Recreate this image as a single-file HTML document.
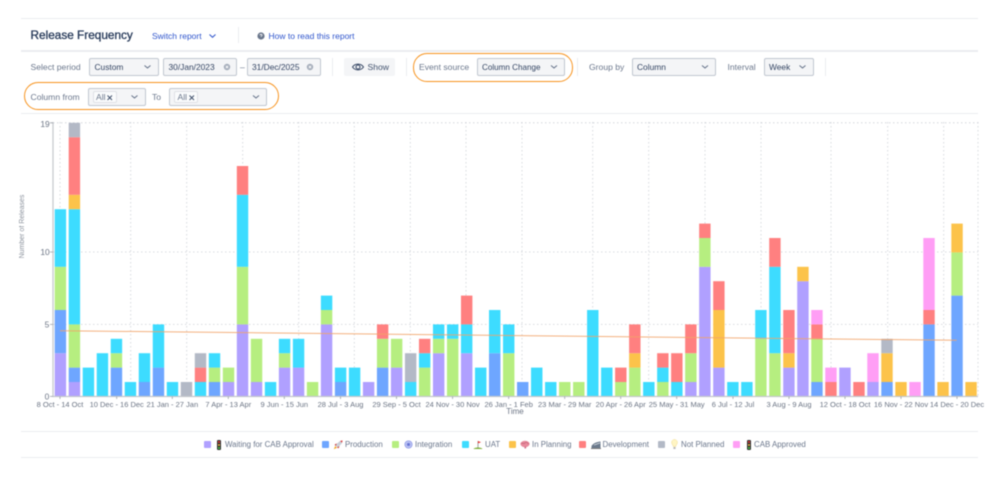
<!DOCTYPE html>
<html lang="en">
<head>
<meta charset="utf-8">
<title>Release Frequency</title>
<style>
html,body{margin:0;padding:0;background:#fff;}
body{width:999px;height:484px;position:relative;overflow:hidden;font-family:"Liberation Sans",sans-serif;}
#w{position:absolute;left:0;top:0;width:999px;height:484px;filter:blur(.4px);}
.a{position:absolute;white-space:nowrap;}
.t{font-size:8.6px;line-height:12px;color:#6b778c;}
.v{font-size:8.4px;line-height:12px;color:#344563;}
.l{font-size:8.5px;line-height:12px;color:#2f55cc;}
.s{position:absolute;box-sizing:border-box;background:#f4f5f7;border:1px solid #c1c7d0;border-radius:2px;height:18px;}
.h{position:absolute;height:1px;background:#ebecf0;}
.d{position:absolute;width:1px;background:#ebecf0;}
.o{position:absolute;box-sizing:border-box;border:1.8px solid #f7931e;border-radius:14px;height:28.5px;}
.tg{position:absolute;box-sizing:border-box;background:#fafbfc;border:1px solid #dfe1e6;border-radius:2px;height:12px;top:91px;}
.lg{font-size:7.9px;line-height:10px;color:#6b778c;top:439.5px;}
.q{position:absolute;width:7px;height:7px;top:441px;border-radius:1px;}
#b rect{width:.814px;}
.P{fill:#b0a0ff}.B{fill:#6ea6ff}.G{fill:#b6ee80}.C{fill:#3ddcff}.Y{fill:#fcc34a}.R{fill:#ff8080}.S{fill:#b3b9c6}.K{fill:#ff9ef5}
.x text{font-family:"Liberation Sans",sans-serif;font-size:7.5px;fill:#6b7484;text-anchor:middle;}
</style>
</head>
<body>
<div id="w">
<div class="h" style="left:21px;top:18px;width:957px"></div>
<div class="h" style="left:21px;top:50px;width:957px;height:1.5px"></div>
<div class="h" style="left:21px;top:113px;width:957px"></div>
<div class="h" style="left:21px;top:431px;width:957px;height:1px"></div>
<div class="h" style="left:21px;top:457px;width:957px"></div>

<div class="a" style="left:30.5px;top:27px;font-size:11.8px;line-height:16px;color:#253858;-webkit-text-stroke:.3px #253858">Release Frequency</div>
<div class="a l" style="left:152px;top:30px">Switch report</div>
<svg class="a" style="left:208px;top:33px" width="9" height="6"><path d="M1.5 1.5 4.5 4.3 7.5 1.5" fill="none" stroke="#2f55cc" stroke-width="1"/></svg>
<div class="d" style="left:238px;top:27px;height:16px"></div>
<svg class="a" style="left:257px;top:32px" width="8" height="8"><circle cx="4" cy="4" r="3.6" fill="#6b778c"/><path d="M3 3.2C3 2 5 2 5 3.2 5 4 4 4 4 4.9" fill="none" stroke="#fff" stroke-width=".8"/></svg>
<div class="a l" style="left:268.5px;top:30px">How to read this report</div>

<div class="a t" style="left:30.5px;top:61px">Select period</div>
<div class="s" style="left:89px;top:58px;width:70px"></div>
<div class="a v" style="left:94.5px;top:61px">Custom</div>
<div class="s" style="left:163px;top:58px;width:74px"></div>
<div class="a v" style="left:168.5px;top:61px">30/Jan/2023</div>
<svg class="a" style="left:223px;top:63px" width="8" height="8"><circle cx="4" cy="4" r="3.2" fill="#a5adba"/><path d="M2.8 2.8 5.2 5.2M5.2 2.8 2.8 5.2" stroke="#fff" stroke-width=".8"/></svg>
<div class="a t" style="left:240px;top:61px">–</div>
<div class="s" style="left:246.5px;top:58px;width:74px"></div>
<div class="a v" style="left:252px;top:61px">31/Dec/2025</div>
<svg class="a" style="left:306px;top:63px" width="8" height="8"><circle cx="4" cy="4" r="3.2" fill="#a5adba"/><path d="M2.8 2.8 5.2 5.2M5.2 2.8 2.8 5.2" stroke="#fff" stroke-width=".8"/></svg>
<div class="d" style="left:332px;top:58px;height:18px"></div>
<div class="a" style="left:344px;top:58px;width:51px;height:18px;background:#f4f5f7;border-radius:2px"></div>
<svg class="a" style="left:351px;top:61px" width="14" height="12"><path d="M1.5 6C4 2.2 10 2.2 12.5 6 10 9.8 4 9.8 1.5 6Z" fill="none" stroke="#344563" stroke-width="1"/><circle cx="7" cy="6" r="2" fill="none" stroke="#344563" stroke-width="1"/></svg>
<div class="a" style="left:367.5px;top:61px;font-size:8.6px;line-height:12px;color:#42526e">Show</div>
<div class="d" style="left:406px;top:58px;height:18px"></div>

<div class="o" style="left:412.5px;top:53px;width:160.5px"></div>
<div class="a t" style="left:419px;top:61px">Event source</div>
<div class="s" style="left:476.5px;top:58px;width:88.5px"></div>
<div class="a v" style="left:482px;top:62px;font-size:8.1px">Column Change</div>
<div class="d" style="left:577px;top:58px;height:18px"></div>
<div class="a t" style="left:589px;top:61px">Group by</div>
<div class="s" style="left:631.5px;top:58px;width:84px"></div>
<div class="a v" style="left:637px;top:61px">Column</div>
<div class="a t" style="left:727.5px;top:61px">Interval</div>
<div class="s" style="left:763.5px;top:58px;width:50px"></div>
<div class="a v" style="left:769px;top:61px">Week</div>
<div class="d" style="left:825px;top:58px;height:18px"></div>

<div class="o" style="left:23.5px;top:81.5px;width:255px"></div>
<div class="a t" style="left:30.5px;top:91px">Column from</div>
<div class="s" style="left:87.5px;top:88px;width:58px"></div>
<div class="tg" style="left:92.5px;width:24px"></div>
<div class="a t" style="left:96px;top:91px">All</div>
<svg class="a" style="left:106px;top:93.5px" width="8" height="8"><path d="M1.5 1.5 6 6M6 1.5 1.5 6" stroke="#42526e" stroke-width="1"/></svg>
<div class="a t" style="left:152px;top:91px">To</div>
<div class="s" style="left:169px;top:88px;width:98px"></div>
<div class="tg" style="left:174px;width:24px"></div>
<div class="a t" style="left:177.5px;top:91px">All</div>
<svg class="a" style="left:188px;top:93.5px" width="8" height="8"><path d="M1.5 1.5 6 6M6 1.5 1.5 6" stroke="#42526e" stroke-width="1"/></svg>

<svg class="a" style="left:0;top:0" width="999" height="120" fill="none" stroke="#5e6c84" stroke-width=".9">
<path d="M144.5 65.5 147.5 68 150.5 65.5"/>
<path d="M551 65.5 554 68 557 65.5"/>
<path d="M702 65.5 705 68 708 65.5"/>
<path d="M799.5 65.5 802.5 68 805.5 65.5"/>
<path d="M131.5 95.5 134.5 98 137.5 95.5"/>
<path d="M253 95.5 256 98 259 95.5"/>
</svg>

<svg class="a" style="left:0;top:115px" width="999" height="305" viewBox="0 115 999 305">
<g stroke="#ced1d7" stroke-width=".8" stroke-dasharray="1.5 2.5" fill="none">
<path d="M53 122.8H978M53 252H978M53 324.4H978"/>
<path d="M60 122V396M130.7 122V396M186.7 122V396M242.7 122V396M298.7 122V396M354.3 122V396M410.3 122V396M466 122V396M522 122V396M592.7 122V396M648.7 122V396M705 122V396M761 122V396M831 122V396M887.7 122V396M943.7 122V396M978 122V396"/>
</g>
<g id="b" transform="translate(54.7 396.4) scale(14.01 -14.4)">
<rect class="P" x="0" y="0" height="3"/><rect class="B" x="0" y="3" height="3"/><rect class="G" x="0" y="6" height="3"/><rect class="C" x="0" y="9" height="4"/>
<rect class="P" x="1" y="0" height="1"/><rect class="B" x="1" y="1" height="1"/><rect class="G" x="1" y="2" height="3"/><rect class="C" x="1" y="5" height="8"/><rect class="Y" x="1" y="13" height="1"/><rect class="R" x="1" y="14" height="4"/><rect class="S" x="1" y="18" height="1"/>
<rect class="C" x="2" y="0" height="2"/>
<rect class="C" x="3" y="0" height="3"/>
<rect class="B" x="4" y="0" height="2"/><rect class="G" x="4" y="2" height="1"/><rect class="C" x="4" y="3" height="1"/>
<rect class="C" x="5" y="0" height="1"/>
<rect class="B" x="6" y="0" height="1"/><rect class="C" x="6" y="1" height="2"/>
<rect class="B" x="7" y="0" height="2"/><rect class="C" x="7" y="2" height="3"/>
<rect class="C" x="8" y="0" height="1"/>
<rect class="S" x="9" y="0" height="1"/>
<rect class="C" x="10" y="0" height="1"/><rect class="R" x="10" y="1" height="1"/><rect class="S" x="10" y="2" height="1"/>
<rect class="B" x="11" y="0" height="1"/><rect class="G" x="11" y="1" height="1"/><rect class="C" x="11" y="2" height="1"/>
<rect class="P" x="12" y="0" height="1"/><rect class="G" x="12" y="1" height="1"/>
<rect class="P" x="13" y="0" height="5"/><rect class="G" x="13" y="5" height="4"/><rect class="C" x="13" y="9" height="5"/><rect class="R" x="13" y="14" height="2"/>
<rect class="P" x="14" y="0" height="1"/><rect class="G" x="14" y="1" height="3"/>
<rect class="C" x="15" y="0" height="1"/>
<rect class="P" x="16" y="0" height="2"/><rect class="G" x="16" y="2" height="1"/><rect class="C" x="16" y="3" height="1"/>
<rect class="P" x="17" y="0" height="2"/><rect class="C" x="17" y="2" height="2"/>
<rect class="G" x="18" y="0" height="1"/>
<rect class="P" x="19" y="0" height="5"/><rect class="G" x="19" y="5" height="1"/><rect class="C" x="19" y="6" height="1"/>
<rect class="B" x="20" y="0" height="1"/><rect class="C" x="20" y="1" height="1"/>
<rect class="C" x="21" y="0" height="2"/>
<rect class="P" x="22" y="0" height="1"/>
<rect class="B" x="23" y="0" height="2"/><rect class="G" x="23" y="2" height="2"/><rect class="R" x="23" y="4" height="1"/>
<rect class="P" x="24" y="0" height="2"/><rect class="G" x="24" y="2" height="2"/>
<rect class="C" x="25" y="0" height="1"/><rect class="S" x="25" y="1" height="2"/>
<rect class="G" x="26" y="0" height="2"/><rect class="C" x="26" y="2" height="1"/><rect class="R" x="26" y="3" height="1"/>
<rect class="P" x="27" y="0" height="3"/><rect class="G" x="27" y="3" height="1"/><rect class="C" x="27" y="4" height="1"/>
<rect class="G" x="28" y="0" height="4"/><rect class="C" x="28" y="4" height="1"/>
<rect class="P" x="29" y="0" height="3"/><rect class="C" x="29" y="3" height="2"/><rect class="R" x="29" y="5" height="2"/>
<rect class="C" x="30" y="0" height="2"/>
<rect class="B" x="31" y="0" height="3"/><rect class="C" x="31" y="3" height="3"/>
<rect class="G" x="32" y="0" height="3"/><rect class="C" x="32" y="3" height="2"/>
<rect class="B" x="33" y="0" height="1"/>
<rect class="C" x="34" y="0" height="2"/>
<rect class="C" x="35" y="0" height="1"/>
<rect class="G" x="36" y="0" height="1"/>
<rect class="G" x="37" y="0" height="1"/>
<rect class="C" x="38" y="0" height="6"/>
<rect class="C" x="39" y="0" height="2"/>
<rect class="G" x="40" y="0" height="1"/><rect class="R" x="40" y="1" height="1"/>
<rect class="G" x="41" y="0" height="2"/><rect class="Y" x="41" y="2" height="1"/><rect class="R" x="41" y="3" height="2"/>
<rect class="C" x="42" y="0" height="1"/>
<rect class="G" x="43" y="0" height="1"/><rect class="C" x="43" y="1" height="1"/><rect class="R" x="43" y="2" height="1"/>
<rect class="C" x="44" y="0" height="1"/><rect class="R" x="44" y="1" height="2"/>
<rect class="P" x="45" y="0" height="1"/><rect class="G" x="45" y="1" height="2"/><rect class="R" x="45" y="3" height="2"/>
<rect class="P" x="46" y="0" height="9"/><rect class="G" x="46" y="9" height="2"/><rect class="R" x="46" y="11" height="1"/>
<rect class="P" x="47" y="0" height="2"/><rect class="Y" x="47" y="2" height="4"/><rect class="R" x="47" y="6" height="2"/>
<rect class="C" x="48" y="0" height="1"/>
<rect class="C" x="49" y="0" height="1"/>
<rect class="G" x="50" y="0" height="4"/><rect class="C" x="50" y="4" height="2"/>
<rect class="G" x="51" y="0" height="3"/><rect class="C" x="51" y="3" height="6"/><rect class="R" x="51" y="9" height="2"/>
<rect class="P" x="52" y="0" height="2"/><rect class="Y" x="52" y="2" height="1"/><rect class="R" x="52" y="3" height="3"/>
<rect class="P" x="53" y="0" height="8"/><rect class="Y" x="53" y="8" height="1"/>
<rect class="B" x="54" y="0" height="1"/><rect class="G" x="54" y="1" height="3"/><rect class="R" x="54" y="4" height="1"/><rect class="K" x="54" y="5" height="1"/>
<rect class="R" x="55" y="0" height="1"/><rect class="K" x="55" y="1" height="1"/>
<rect class="P" x="56" y="0" height="2"/>
<rect class="R" x="57" y="0" height="1"/>
<rect class="P" x="58" y="0" height="1"/><rect class="K" x="58" y="1" height="2"/>
<rect class="B" x="59" y="0" height="1"/><rect class="Y" x="59" y="1" height="2"/><rect class="S" x="59" y="3" height="1"/>
<rect class="Y" x="60" y="0" height="1"/>
<rect class="K" x="61" y="0" height="1"/>
<rect class="B" x="62" y="0" height="5"/><rect class="R" x="62" y="5" height="1"/><rect class="K" x="62" y="6" height="5"/>
<rect class="Y" x="63" y="0" height="1"/>
<rect class="B" x="64" y="0" height="7"/><rect class="G" x="64" y="7" height="3"/><rect class="Y" x="64" y="10" height="2"/>
<rect class="Y" x="65" y="0" height="1"/>
</g>
<path d="M60 330.7 956.7 340.3" stroke="#f2a368" stroke-width="1" opacity=".85" fill="none"/>
<path d="M53 122V396.5H978" stroke="#c4c7cc" stroke-width="1.2" fill="none"/>
<path d="M50 122.8H53M50 252H53M50 324.4H53M50 396.4H53" stroke="#9aa0a8" stroke-width=".8"/>
<path d="M60 396.5v2.5M116.7 396.5v2.5M172.3 396.5v2.5M228.3 396.5v2.5M284.3 396.5v2.5M340.5 396.5v2.5M396.5 396.5v2.5M452.6 396.5v2.5M508.7 396.5v2.5M564.7 396.5v2.5M620.7 396.5v2.5M676.7 396.5v2.5M733 396.5v2.5M789 396.5v2.5M845 396.5v2.5M901 396.5v2.5M957 396.5v2.5" stroke="#9aa0a8" stroke-width=".8"/>
<g class="x">
<text x="60" y="407">8 Oct - 14 Oct</text>
<text x="116.7" y="407">10 Dec - 16 Dec</text>
<text x="172.3" y="407">21 Jan - 27 Jan</text>
<text x="228.3" y="407">7 Apr - 13 Apr</text>
<text x="284.3" y="407">9 Jun - 15 Jun</text>
<text x="340.5" y="407">28 Jul - 3 Aug</text>
<text x="396.5" y="407">29 Sep - 5 Oct</text>
<text x="452.6" y="407">24 Nov - 30 Nov</text>
<text x="508.7" y="407">26 Jan - 1 Feb</text>
<text x="564.7" y="407">23 Mar - 29 Mar</text>
<text x="620.7" y="407">20 Apr - 26 Apr</text>
<text x="676.7" y="407">25 May - 31 May</text>
<text x="733" y="407">6 Jul - 12 Jul</text>
<text x="789" y="407">3 Aug - 9 Aug</text>
<text x="845" y="407">12 Oct - 18 Oct</text>
<text x="901" y="407">16 Nov - 22 Nov</text>
<text x="957" y="407">14 Dec - 20 Dec</text>
<text x="515" y="414" style="font-size:8px">Time</text>
<text x="45" y="127" style="font-size:8.4px">19</text>
<text x="45" y="255" style="font-size:8.4px">10</text>
<text x="47" y="327.5" style="font-size:8.4px">5</text>
<text x="47" y="399.5" style="font-size:8.4px">0</text>
<text transform="translate(24 226.5) rotate(-90)" style="font-size:7px;fill:#8a919c">Number of Releases</text>
</g>
</svg>

<div class="q" style="left:203.7px;background:#b0a0ff"></div>
<svg class="a" style="left:216px;top:440px" width="6" height="10"><rect x="1" y="0" width="4" height="10" rx="1" fill="#333"/><circle cx="3" cy="2" r="1" fill="#e33"/><circle cx="3" cy="5" r="1" fill="#f5b83d"/><circle cx="3" cy="8" r="1" fill="#4c4"/></svg>
<div class="a lg" style="left:225px">Waiting for CAB Approval</div>
<div class="q" style="left:322.3px;background:#6ea6ff"></div>
<svg class="a" style="left:333px;top:439.5px" width="10" height="10"><path d="M.8 9.2 2.2 6 4 7.8Z" fill="#f5a623"/><path d="M2.2 5.2 6.6 1.2 9.6.4 8.8 3.4 4.8 7.8Z" fill="#c9cfd9"/><path d="M7.2 1 9.6.4 9 2.8Z" fill="#d33"/><path d="M1.6 4.6 3.8 3.4 2.8 6ZM5.4 8.4 6.6 6.2 4 7.2Z" fill="#c33"/></svg>
<div class="a lg" style="left:345px">Production</div>
<div class="q" style="left:392px;background:#b6ee80"></div>
<svg class="a" style="left:404px;top:440px" width="9" height="9"><circle cx="4.5" cy="4.5" r="4" fill="#8f9ae8"/><circle cx="4.5" cy="4.5" r="2.6" fill="none" stroke="#e4e7fb" stroke-width=".7"/><circle cx="4.5" cy="4.5" r="1" fill="#5a66c8"/></svg>
<div class="a lg" style="left:415px">Integration</div>
<div class="q" style="left:462px;background:#3ddcff"></div>
<svg class="a" style="left:473px;top:439.5px" width="10" height="10"><path d="M.5 9C1.5 7 8.5 7 9.5 9Z" fill="#7fb03a"/><path d="M5 7.5V1" stroke="#666" stroke-width=".6"/><path d="M5 1 8 2.2 5 3.4Z" fill="#e33"/></svg>
<div class="a lg" style="left:485px">UAT</div>
<div class="q" style="left:508.7px;background:#fcc34a"></div>
<svg class="a" style="left:520px;top:440px" width="10" height="9"><ellipse cx="5" cy="4" rx="4.6" ry="3.2" fill="#e88a9c"/><path d="M1.5 3.5C3 2.5 4 4.5 5 3S7.5 2.5 8.5 4" fill="none" stroke="#b85a70" stroke-width=".6"/><rect x="4.5" y="6.5" width="1.6" height="2" fill="#d0708a"/></svg>
<div class="a lg" style="left:532px">In Planning</div>
<div class="q" style="left:579px;background:#ff8080"></div>
<svg class="a" style="left:590.5px;top:440px" width="10" height="9"><path d="M.5 8V6C2 3.5 5 2 9.5 1.5V8Z" fill="#6b7a8c"/><path d="M3 5 9 3" stroke="#dfe3e8" stroke-width=".8"/><path d="M0 8.5H10" stroke="#444" stroke-width=".7"/></svg>
<div class="a lg" style="left:602.5px">Development</div>
<div class="q" style="left:658px;background:#b3b9c6"></div>
<svg class="a" style="left:671px;top:439px" width="7" height="11"><path d="M3.5.5C1.6.5.6 2 .6 3.5.6 5 2 6 2.2 7.5H4.8C5 6 6.4 5 6.4 3.5 6.4 2 5.4.5 3.5.5Z" fill="#fff5c4" stroke="#f0dc90" stroke-width=".5"/><rect x="2.4" y="8" width="2.2" height="2" fill="#bbb"/></svg>
<div class="a lg" style="left:681px">Not Planned</div>
<div class="q" style="left:733px;background:#ff9ef5"></div>
<svg class="a" style="left:745.5px;top:440px" width="6" height="10"><rect x="1" y="0" width="4" height="10" rx="1" fill="#333"/><circle cx="3" cy="2" r="1" fill="#e33"/><circle cx="3" cy="5" r="1" fill="#f5b83d"/><circle cx="3" cy="8" r="1" fill="#4c4"/></svg>
<div class="a lg" style="left:754px">CAB Approved</div>
</div>
</body>
</html>
